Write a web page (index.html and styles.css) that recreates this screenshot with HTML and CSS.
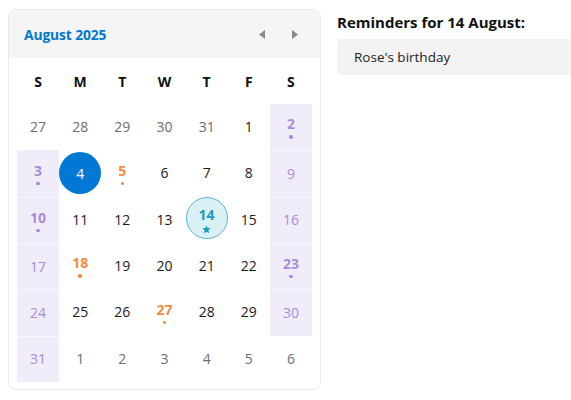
FILE: index.html
```html
<!DOCTYPE html>
<html>
<head>
<meta charset="utf-8">
<link rel="stylesheet" href="styles.css">
</head>
<body>
<div class="page">
  <div class="card">
    <div class="card-head">
      <span class="month">August 2025</span>
      <div class="navs">
        <span class="nav"><svg width="6" height="9" viewBox="0 0 6 9"><path d="M6 0 L0 4.5 L6 9 Z" fill="#8a8a8a"/></svg></span>
        <span class="nav"><svg width="6" height="9" viewBox="0 0 6 9"><path d="M0 0 L6 4.5 L0 9 Z" fill="#8a8a8a"/></svg></span>
      </div>
    </div>
    <div class="grid">
      <div class="dow">S</div><div class="dow">M</div><div class="dow">T</div><div class="dow">W</div><div class="dow">T</div><div class="dow">F</div><div class="dow">S</div>

      <div class="cell other"><span class="num">27</span></div>
      <div class="cell other"><span class="num">28</span></div>
      <div class="cell other"><span class="num">29</span></div>
      <div class="cell other"><span class="num">30</span></div>
      <div class="cell other"><span class="num">31</span></div>
      <div class="cell"><span class="num">1</span></div>
      <div class="cell we first"><span class="num bold">2</span><span class="dot"></span></div>

      <div class="cell we first"><span class="num bold">3</span><span class="dot"></span></div>
      <div class="cell"><span class="today">4</span></div>
      <div class="cell orange"><span class="num bold">5</span><span class="dot"></span></div>
      <div class="cell"><span class="num">6</span></div>
      <div class="cell"><span class="num">7</span></div>
      <div class="cell"><span class="num">8</span></div>
      <div class="cell we"><span class="num">9</span></div>

      <div class="cell we"><span class="num bold">10</span><span class="dot"></span></div>
      <div class="cell"><span class="num">11</span></div>
      <div class="cell"><span class="num">12</span></div>
      <div class="cell"><span class="num">13</span></div>
      <div class="cell"><span class="selected"><span class="snum">14</span><svg class="star" width="9" height="9" viewBox="0 0 10 10"><path d="M5 0.3 L6.3 3.4 L9.7 3.7 L7.1 5.9 L7.9 9.3 L5 7.5 L2.1 9.3 L2.9 5.9 L0.3 3.7 L3.7 3.4 Z" fill="#1e9cb9"/></svg></span></div>
      <div class="cell"><span class="num">15</span></div>
      <div class="cell we"><span class="num">16</span></div>

      <div class="cell we"><span class="num">17</span></div>
      <div class="cell orange"><span class="num bold">18</span><span class="dot"></span></div>
      <div class="cell"><span class="num">19</span></div>
      <div class="cell"><span class="num">20</span></div>
      <div class="cell"><span class="num">21</span></div>
      <div class="cell"><span class="num">22</span></div>
      <div class="cell we"><span class="num bold">23</span><span class="dot"></span></div>

      <div class="cell we"><span class="num">24</span></div>
      <div class="cell"><span class="num">25</span></div>
      <div class="cell"><span class="num">26</span></div>
      <div class="cell orange"><span class="num bold">27</span><span class="dot"></span></div>
      <div class="cell"><span class="num">28</span></div>
      <div class="cell"><span class="num">29</span></div>
      <div class="cell we"><span class="num">30</span></div>

      <div class="cell we"><span class="num">31</span></div>
      <div class="cell other"><span class="num">1</span></div>
      <div class="cell other"><span class="num">2</span></div>
      <div class="cell other"><span class="num">3</span></div>
      <div class="cell other"><span class="num">4</span></div>
      <div class="cell other"><span class="num">5</span></div>
      <div class="cell other"><span class="num">6</span></div>
    </div>
  </div>
  <div class="panel">
    <h2 class="panel-title">Reminders for 14 August:</h2>
    <div class="reminder">Rose's birthday</div>
  </div>
</div>
</body>
</html>
```

FILE: styles.css
```css
html, body {
  margin: 0;
  padding: 0;
  overflow: hidden;
  background: #ffffff;
}
body {
  font-family: "Open Sans", "Noto Sans", sans-serif;
  color: #1a1a1a;
}
.page {
  display: flex;
  align-items: flex-start;
  gap: 16px;
  padding: 9px 0 0 8px;
}
.card {
  width: 313px;
  box-sizing: border-box;
  border: 1px solid #ebebeb;
  border-radius: 8px;
  overflow: hidden;
  padding-bottom: 7px;
  flex: none;
}
.card-head {
  height: 48px;
  background: #f5f5f5;
  display: flex;
  align-items: center;
  justify-content: space-between;
  padding: 0 22px 0 15px;
}
.month {
  color: #0078d4;
  font-weight: 700;
  font-size: 13.8px;
  letter-spacing: -0.1px;
}
.navs {
  display: flex;
  gap: 27px;
  align-items: center;
}
.nav {
  display: flex;
  width: 6px;
  height: 9px;
}
.grid {
  display: grid;
  grid-template-columns: repeat(7, 1fr);
  grid-template-rows: 46px repeat(6, 46.33px);
  margin: 0 8px;
}
.dow {
  display: flex;
  align-items: center;
  justify-content: center;
  font-weight: 700;
  font-size: 14px;
  color: #111;
}
.cell {
  display: flex;
  flex-direction: column;
  align-items: center;
  justify-content: center;
  font-size: 14px;
  color: #1a1a1a;
  box-sizing: border-box;
}
.num {
  line-height: 18px;
}
.bold {
  font-weight: 700;
}
.dot {
  width: 3.5px;
  height: 3.5px;
  border-radius: 50%;
  background: currentColor;
  margin-top: 2px;
}
.other {
  color: #6e6e6e;
}
.we {
  background: #f1ecf9;
  color: #a98bda;
  border-top: 1px solid #f8f6fc;
}
.we.first {
  border-top: none;
}
.orange {
  color: #f58a3c;
}
.today {
  width: 42px;
  height: 42px;
  border-radius: 50%;
  background: #0078d4;
  color: #ffffff;
  display: flex;
  align-items: center;
  justify-content: center;
  font-size: 14px;
}
.selected {
  width: 40px;
  height: 40px;
  border-radius: 50%;
  background: #d9f1f5;
  border: 1px solid #5ab6cf;
  display: flex;
  flex-direction: column;
  align-items: center;
  justify-content: center;
  color: #1e9cb9;
  font-weight: 700;
  margin-top: -4px;
}
.snum {
  line-height: 18px;
  margin-top: 4px;
}
.star {
  display: block;
  margin-top: 1px;
}
.panel {
  flex: 1;
  min-width: 0;
  padding-top: 3px;
}
.panel-title {
  margin: 0;
  font-size: 15px;
  font-weight: 700;
  color: #111;
  line-height: 20px;
}
.reminder {
  margin-top: 7px;
  background: #f3f3f3;
  border-radius: 4px 0 0 4px;
  height: 36px;
  display: flex;
  align-items: center;
  padding-left: 17px;
  font-size: 13.5px;
  color: #222;
}
```
